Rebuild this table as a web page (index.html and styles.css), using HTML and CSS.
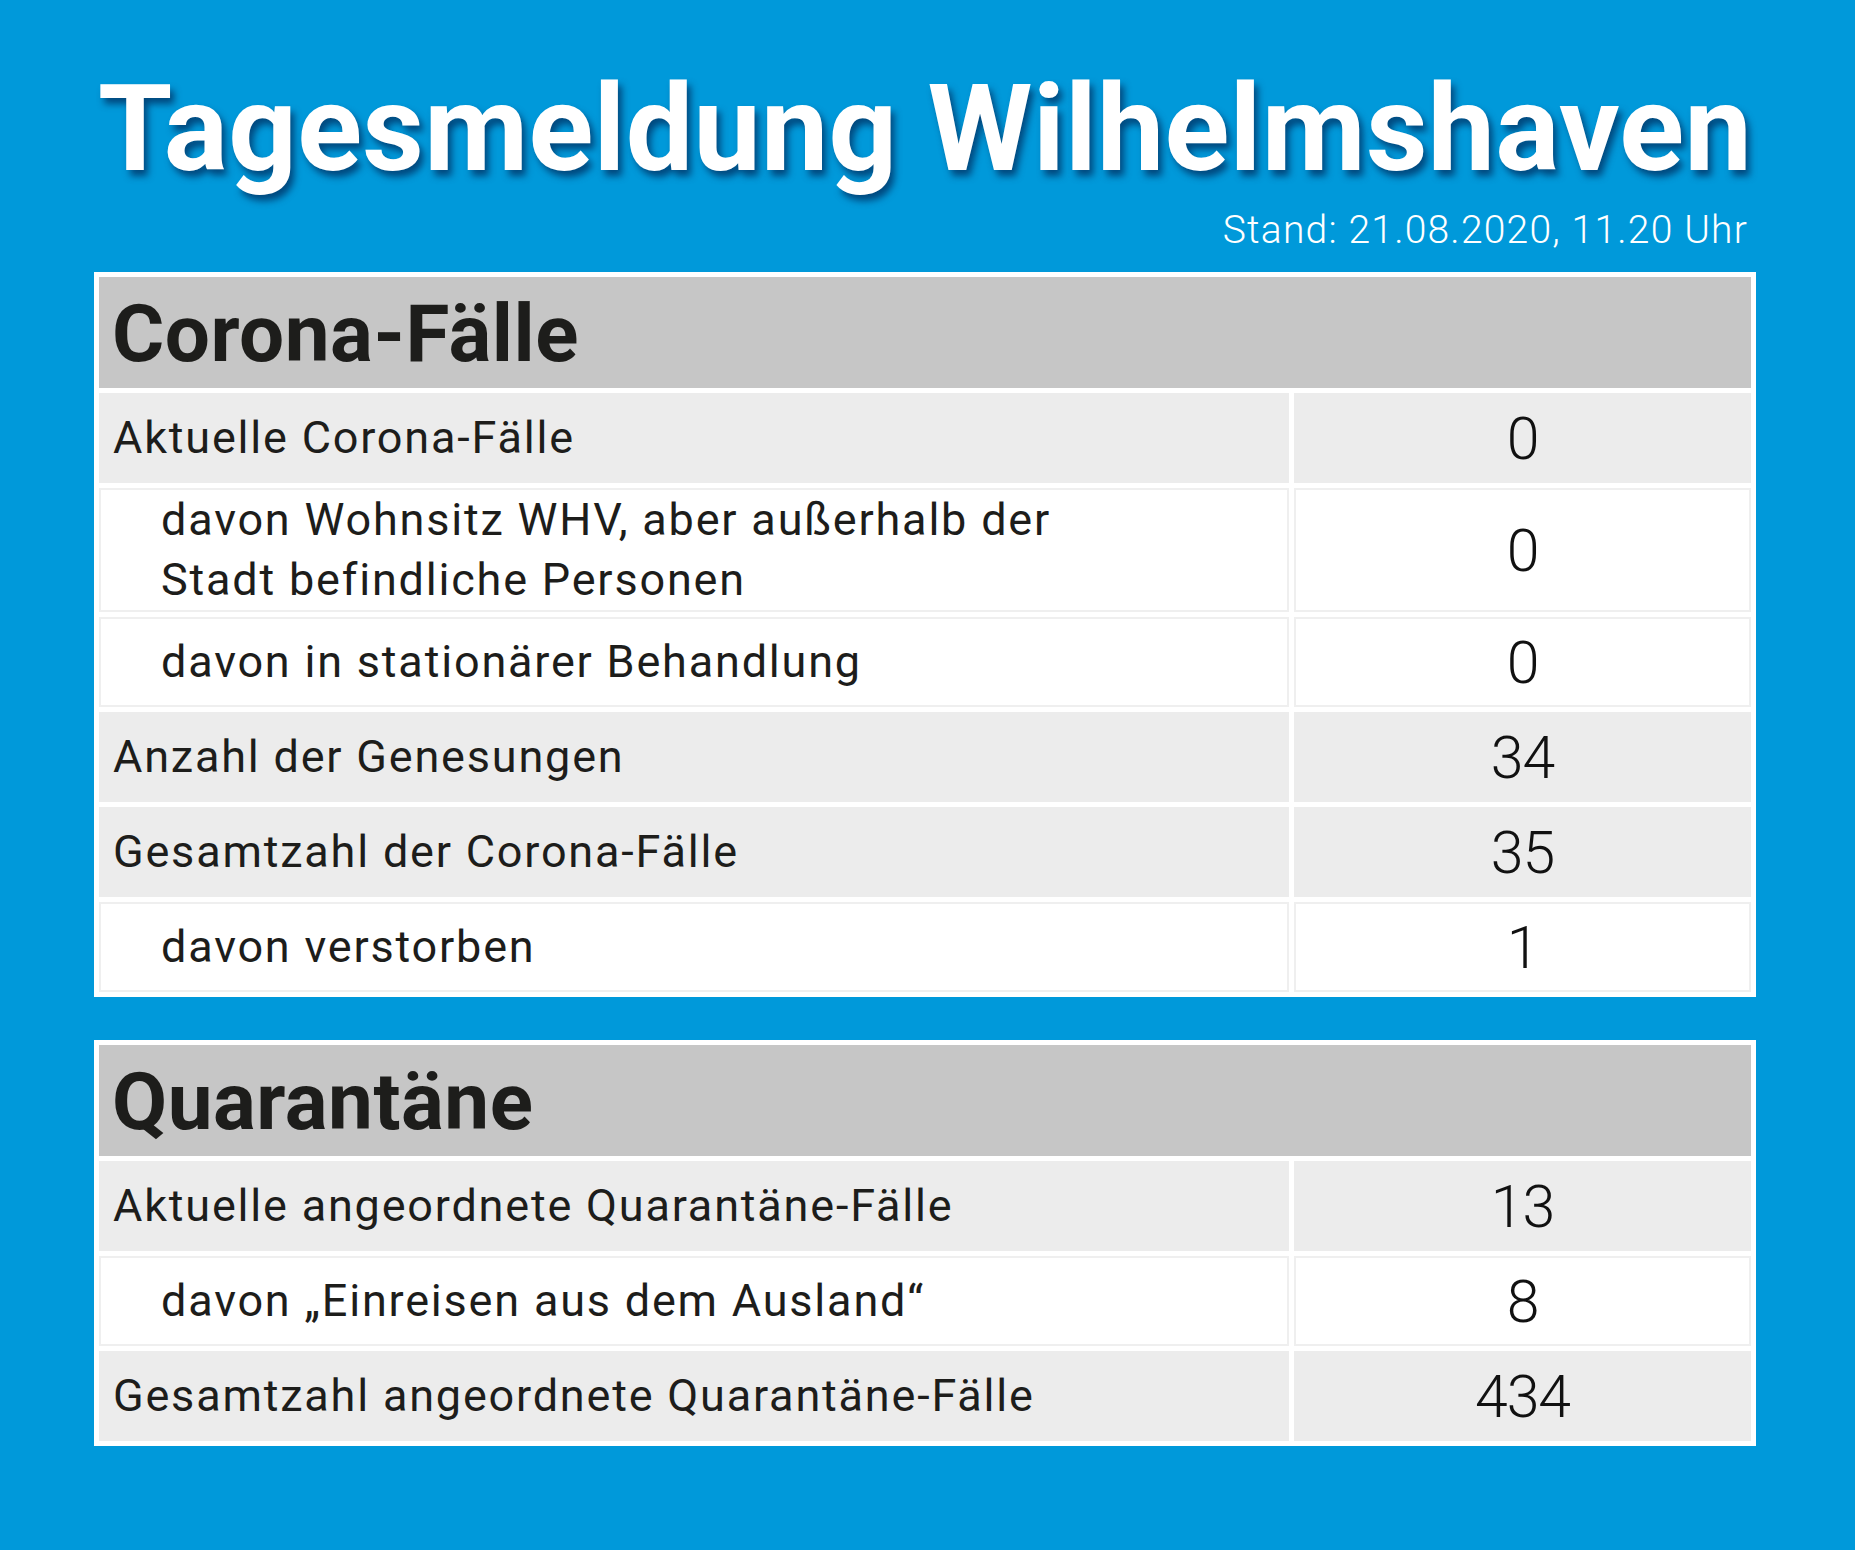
FILE: index.html
```html
<!DOCTYPE html>
<html lang="de">
<head>
<meta charset="utf-8">
<title>Tagesmeldung Wilhelmshaven</title>
<link rel="stylesheet" href="styles.css">
</head>
<body>
<main class="page">
  <h1 class="title">Tagesmeldung Wilhelmshaven</h1>
  <p class="stand">Stand: 21.08.2020, 11.20 Uhr</p>

  <section class="card">
    <div class="card-head">Corona-Fälle</div>
    <div class="row row--gray"><div class="label">Aktuelle Corona-Fälle</div><div class="value">0</div></div>
    <div class="row row--white row--tall"><div class="label label--sub">davon Wohnsitz WHV, aber außerhalb der<br>Stadt befindliche Personen</div><div class="value">0</div></div>
    <div class="row row--white"><div class="label label--sub">davon in stationärer Behandlung</div><div class="value">0</div></div>
    <div class="row row--gray"><div class="label">Anzahl der Genesungen</div><div class="value">34</div></div>
    <div class="row row--gray"><div class="label">Gesamtzahl der Corona-Fälle</div><div class="value">35</div></div>
    <div class="row row--white"><div class="label label--sub">davon verstorben</div><div class="value">1</div></div>
  </section>

  <section class="card card--second">
    <div class="card-head">Quarantäne</div>
    <div class="row row--gray"><div class="label">Aktuelle angeordnete Quarantäne-Fälle</div><div class="value">13</div></div>
    <div class="row row--white"><div class="label label--sub">davon „Einreisen aus dem Ausland“</div><div class="value">8</div></div>
    <div class="row row--gray"><div class="label">Gesamtzahl angeordnete Quarantäne-Fälle</div><div class="value">434</div></div>
  </section>
</main>
</body>
</html>
```

FILE: styles.css
```css
* {
  box-sizing: border-box;
}

html,
body {
  margin: 0;
  padding: 0;
}

body {
  background: #0099da;
  width: 1855px;
  height: 1550px;
  overflow: hidden;
  font-family: Roboto, "Liberation Sans", Arial, sans-serif;
  color: #1d1d1b;
}

.page {
  width: 1662px;
  margin-left: 94px;
  padding-top: 59px;
}

.title {
  margin: 0;
  text-align: center;
  color: #ffffff;
  font-weight: 700;
  font-size: 120px;
  line-height: 140px;
  letter-spacing: 0.3px;
  text-shadow: 4px 6px 7px rgba(0, 45, 95, 0.75);
}

.stand {
  margin: 8px 8px 0 0;
  text-align: right;
  color: #ffffff;
  font-weight: 300;
  font-size: 39px;
  line-height: 46px;
  letter-spacing: 1.2px;
}

.card {
  margin-top: 19px;
  background: #ffffff;
  padding: 5px;
  display: flex;
  flex-direction: column;
  gap: 5px;
}

.card--second {
  margin-top: 43px;
}

.card-head {
  background: #c6c6c6;
  height: 111px;
  display: flex;
  align-items: center;
  padding-left: 13px;
  padding-top: 3px;
  font-weight: 700;
  font-size: 80px;
  letter-spacing: 0.5px;
  color: #1d1d1b;
}

.row {
  display: grid;
  grid-template-columns: 1190px 1fr;
  gap: 5px;
  height: 90px;
}

.row--tall {
  height: 124px;
}

.label,
.value {
  display: flex;
  align-items: center;
}

.row--gray .label,
.row--gray .value {
  background: #ececec;
}

.row--white .label,
.row--white .value {
  background: #ffffff;
  border: 2px solid #efefef;
}

.label {
  padding-left: 14px;
  font-size: 45px;
  line-height: 60px;
  letter-spacing: 0.04em;
  color: #1d1d1b;
}

.row--white .label {
  padding-left: 12px;
}

.label--sub {
  padding-left: 62px;
}

.row--white .label--sub {
  padding-left: 60px;
}

.value {
  justify-content: center;
  font-weight: 300;
  font-size: 59px;
  letter-spacing: -1px;
  color: #111111;
}
```
